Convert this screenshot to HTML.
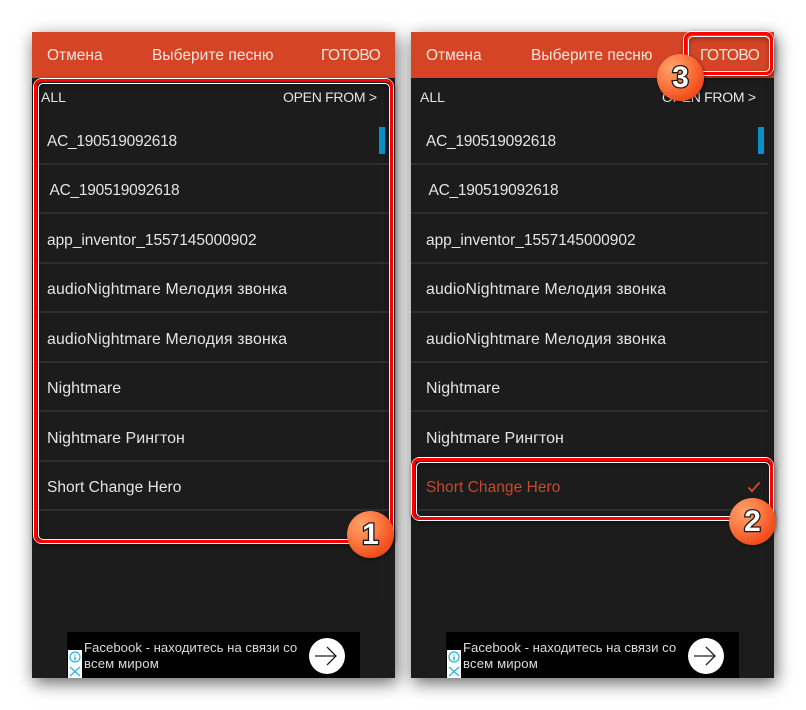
<!DOCTYPE html>
<html><head><meta charset="utf-8">
<style>
html,body{margin:0;padding:0;background:#fff}
body{width:806px;height:710px;position:relative;overflow:hidden;font-family:"Liberation Sans",sans-serif}
.sh{position:absolute;top:32px;width:363px;height:646px;background:#555;box-shadow:2px 5px 16px rgba(0,0,0,.6)}
.ph{position:absolute;top:32px;width:363px;height:646px;background:#1c1c1c;overflow:hidden}
.hd{position:absolute;left:0;top:0;width:363px;height:46px;background:#d54525}
.t{position:absolute;white-space:nowrap;font-size:15.5px;line-height:18px;color:#e4e4e4;filter:blur(.3px)}
.hd .t{color:#f5e6df;font-size:15.5px;top:15px}
.s{font-size:14px;top:56px}
.l{position:absolute;left:0;width:357px;height:2px;background:#2e2e2e}
.sb{position:absolute;left:347px;top:95px;width:6px;height:27px;background:#0a8fc4}
.tr{position:absolute;left:350px;top:46px;width:1px;height:520px;background:#202020}
.ad{position:absolute;left:35px;top:600px;width:293px;height:46px;background:#000}
.ad .x{position:absolute;left:17px;white-space:nowrap;font-size:13.2px;line-height:16px;color:#dcdcdc;filter:blur(.3px)}
.box{position:absolute;box-sizing:border-box;border:1.5px solid #fff;border-radius:9px;box-shadow:1px 2px 5px rgba(0,0,0,.45)}
.box i{position:absolute;inset:0;box-sizing:border-box;border:3.5px solid #f00;border-radius:7px}
.box b{position:absolute;inset:3.5px;box-sizing:border-box;border:1.3px solid #fff;border-radius:5px;box-shadow:inset 0 2px 5px rgba(0,0,0,.35)}
.bd{position:absolute;width:47px;height:47px;border-radius:50%;background:radial-gradient(circle at 32% 30%,#ffa26c 0%,#fb7a42 38%,#f2521f 68%,#df3a10 100%);box-shadow:1px 1px 3px rgba(0,0,0,.45)}
.bd span{position:absolute;left:0;right:0;top:7px;text-align:center;font:bold 30px/34px "Liberation Sans",sans-serif;color:#fff;-webkit-text-stroke:2.6px #1a1a1a;paint-order:stroke fill}
</style></head><body>

<div class="sh" style="left:32px"></div>
<div class="sh" style="left:411px"></div>

<div class="ph" style="left:32px">
<div class="hd">
<div class="t" style="left:15px">Отмена</div>
<div class="t" style="left:120px;letter-spacing:.05px">Выберите песню</div>
<div class="t" style="left:289px;letter-spacing:-.5px">ГОТОВО</div>
</div>
<div class="t s" style="left:9px">ALL</div>
<div class="t s" style="left:251px;letter-spacing:-.28px">OPEN FROM &gt;</div>
<div class="tr"></div>
<div class="sb"></div>
<div class="t" style="left:15px;top:101px;letter-spacing:-.25px">AC_190519092618</div>
<div class="l" style="top:131px"></div>
<div class="t" style="left:17.5px;top:150px;letter-spacing:-.25px">AC_190519092618</div>
<div class="l" style="top:180px"></div>
<div class="t" style="left:15px;top:200px;letter-spacing:-.03px">app_inventor_1557145000902</div>
<div class="l" style="top:230px"></div>
<div class="t" style="left:15px;top:249px;font-size:15.8px;letter-spacing:.17px">audioNightmare Мелодия звонка</div>
<div class="l" style="top:279px"></div>
<div class="t" style="left:15px;top:299px;font-size:15.8px;letter-spacing:.17px">audioNightmare Мелодия звонка</div>
<div class="l" style="top:329px"></div>
<div class="t" style="left:15px;top:348px;font-size:16px;letter-spacing:.05px">Nightmare</div>
<div class="l" style="top:378px"></div>
<div class="t" style="left:15px;top:398px;font-size:16px;letter-spacing:.03px">Nightmare Рингтон</div>
<div class="l" style="top:428px"></div>
<div class="t" style="left:15px;top:447px;letter-spacing:.05px">Short Change Hero</div>
<div class="l" style="top:477px"></div>
<div class="ad">
<div style="position:absolute;left:1px;top:18px;width:14px;height:28px;background:#fff"></div>
<svg style="position:absolute;left:1px;top:18px" width="14" height="28" viewBox="0 0 14 28"><circle cx="7" cy="7" r="5" fill="none" stroke="#2ab4dc" stroke-width="1.2"/><path d="M7 4.5v1M7 6.5v4" stroke="#2ab4dc" stroke-width="1.5"/><path d="M2 17l10 9M12 17L2 26" stroke="#2ab4dc" stroke-width="1.3"/></svg>
<div class="x" style="top:8px">Facebook - находитесь на связи со</div>
<div class="x" style="top:24px;letter-spacing:.12px">всем миром</div>
<svg style="position:absolute;left:241px;top:5px" width="38" height="38" viewBox="0 0 38 38"><circle cx="19" cy="19" r="18" fill="#fff"/><path d="M7 19H28M19 10L28 19L19 28" fill="none" stroke="#222" stroke-width="1.3"/></svg>
</div>
</div>

<div class="ph" style="left:411px">
<div class="hd">
<div class="t" style="left:15px">Отмена</div>
<div class="t" style="left:120px;letter-spacing:.05px">Выберите песню</div>
<div class="t" style="left:289px;letter-spacing:-.5px">ГОТОВО</div>
</div>
<div class="t s" style="left:9px">ALL</div>
<div class="t s" style="left:251px;letter-spacing:-.28px">OPEN FROM &gt;</div>
<div class="tr"></div>
<div class="sb"></div>
<div class="t" style="left:15px;top:101px;letter-spacing:-.25px">AC_190519092618</div>
<div class="l" style="top:131px"></div>
<div class="t" style="left:17.5px;top:150px;letter-spacing:-.25px">AC_190519092618</div>
<div class="l" style="top:180px"></div>
<div class="t" style="left:15px;top:200px;letter-spacing:-.03px">app_inventor_1557145000902</div>
<div class="l" style="top:230px"></div>
<div class="t" style="left:15px;top:249px;font-size:15.8px;letter-spacing:.17px">audioNightmare Мелодия звонка</div>
<div class="l" style="top:279px"></div>
<div class="t" style="left:15px;top:299px;font-size:15.8px;letter-spacing:.17px">audioNightmare Мелодия звонка</div>
<div class="l" style="top:329px"></div>
<div class="t" style="left:15px;top:348px;font-size:16px;letter-spacing:.05px">Nightmare</div>
<div class="l" style="top:378px"></div>
<div class="t" style="left:15px;top:398px;font-size:16px;letter-spacing:.03px">Nightmare Рингтон</div>
<div class="l" style="top:428px"></div>
<div class="t" style="left:15px;top:447px;letter-spacing:.05px;color:#c9472a">Short Change Hero</div>
<svg style="position:absolute;left:335px;top:448px" width="16" height="14" viewBox="0 0 16 14"><path d="M2.5 7.5L6 11L13.5 2.5" fill="none" stroke="#c9472a" stroke-width="2"/></svg>
<div class="l" style="top:477px"></div>
<div class="ad">
<div style="position:absolute;left:1px;top:18px;width:14px;height:28px;background:#fff"></div>
<svg style="position:absolute;left:1px;top:18px" width="14" height="28" viewBox="0 0 14 28"><circle cx="7" cy="7" r="5" fill="none" stroke="#2ab4dc" stroke-width="1.2"/><path d="M7 4.5v1M7 6.5v4" stroke="#2ab4dc" stroke-width="1.5"/><path d="M2 17l10 9M12 17L2 26" stroke="#2ab4dc" stroke-width="1.3"/></svg>
<div class="x" style="top:8px">Facebook - находитесь на связи со</div>
<div class="x" style="top:24px;letter-spacing:.12px">всем миром</div>
<svg style="position:absolute;left:241px;top:5px" width="38" height="38" viewBox="0 0 38 38"><circle cx="19" cy="19" r="18" fill="#fff"/><path d="M7 19H28M19 10L28 19L19 28" fill="none" stroke="#222" stroke-width="1.3"/></svg>
</div>
</div>

<div class="box" style="left:33px;top:78px;width:361px;height:466px"><i></i><b></b></div>
<div class="box" style="left:411px;top:457px;width:363px;height:64px"><i></i><b></b></div>
<div class="box" style="left:683px;top:31px;width:91px;height:45px"><i></i><b></b></div>

<div class="bd" style="left:347px;top:511px"><span>1</span></div>
<div class="bd" style="left:729px;top:498px"><span>2</span></div>
<div class="bd" style="left:657px;top:54px"><span>3</span></div>
</body></html>
